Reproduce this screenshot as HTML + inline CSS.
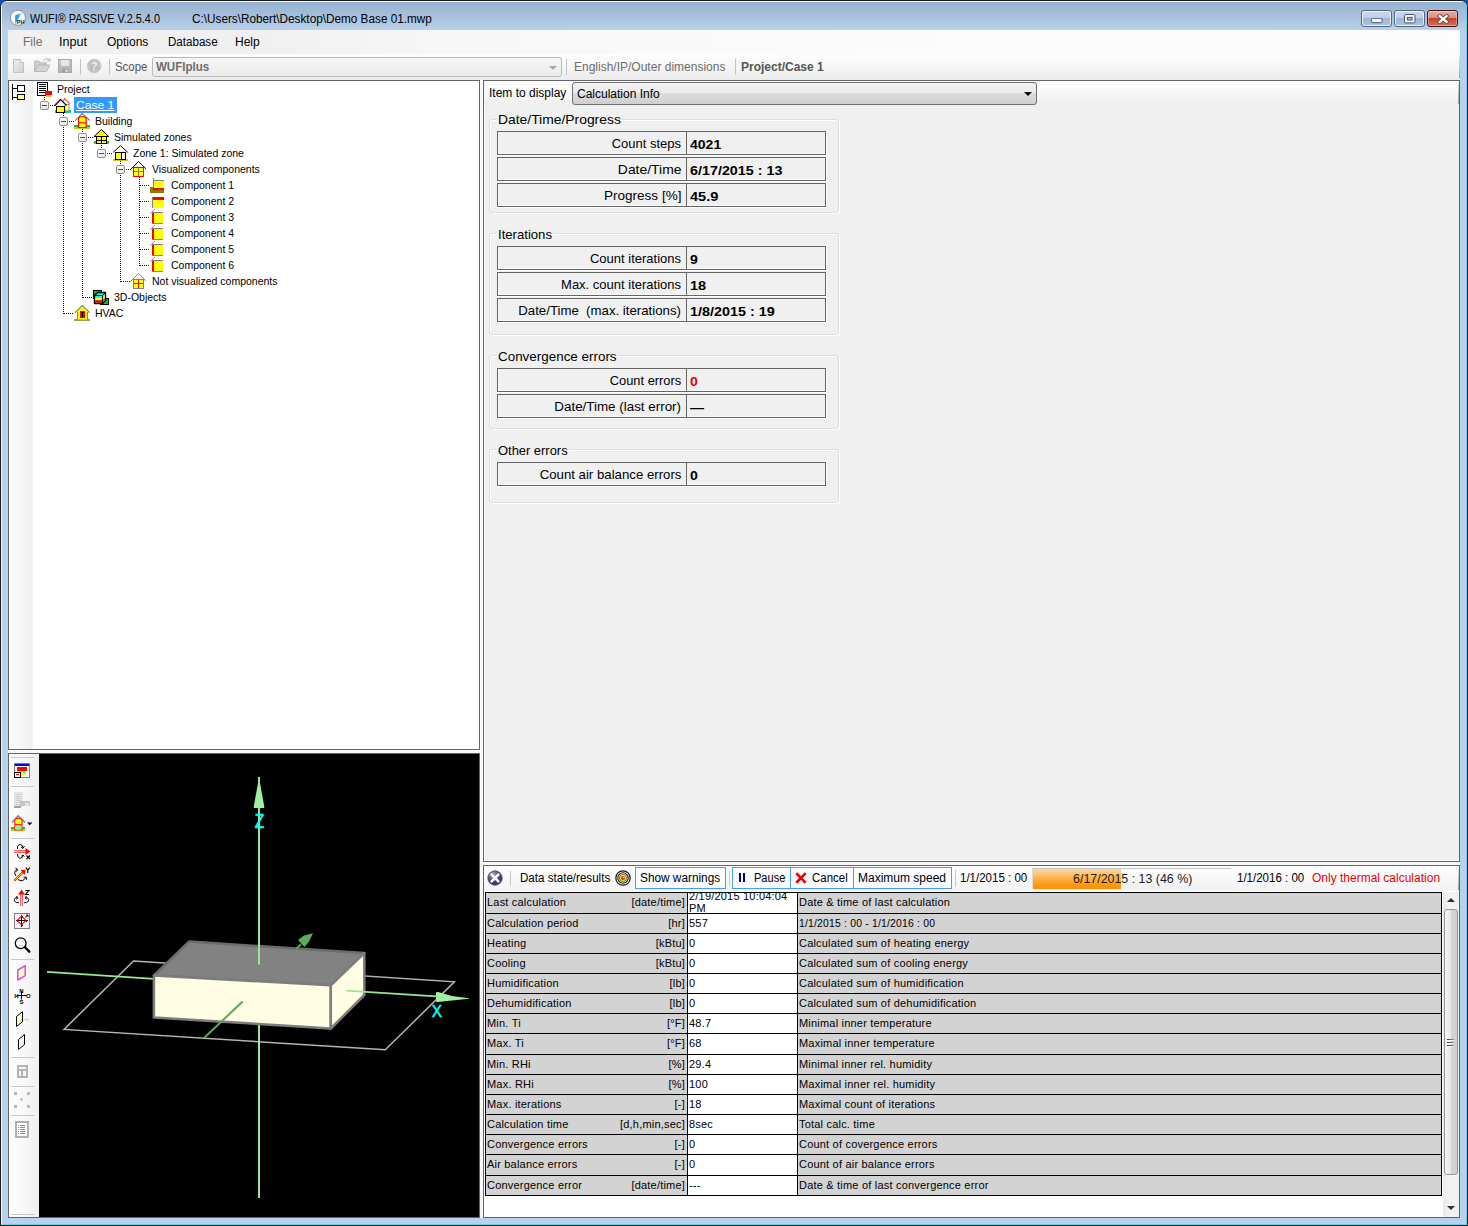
<!DOCTYPE html>
<html>
<head>
<meta charset="utf-8">
<title>WUFI PASSIVE</title>
<style>
*{box-sizing:border-box;margin:0;padding:0}
html,body{width:1468px;height:1226px;overflow:hidden;background:#1450b0}
body{position:relative;font-family:"Liberation Sans",sans-serif;font-size:12px;color:#000}
.a{position:absolute}
.sx{display:inline-block;transform-origin:0 50%;white-space:pre}
#frame{position:absolute;left:0;top:0;width:1468px;height:1226px;background:#b9d1ea;border:1px solid #1c1c1c;border-radius:7px 7px 0 0;overflow:hidden}
#frame:before{content:"";position:absolute;left:0;top:0;right:0;bottom:0;border:1px solid rgba(255,255,255,.85);border-right-color:#5fd0f4;border-bottom-color:#5fd0f4;border-radius:6px 6px 0 0}
#titlebar{position:absolute;left:1px;top:1px;width:1464px;height:28px;background:linear-gradient(#98b2d3,#a2bdd9 40%,#b9d1ea)}
#title{position:absolute;left:30px;top:12px;font-size:12px;line-height:14px;white-space:pre}
#client{position:absolute;left:8px;top:30px;width:1452px;height:1188px;background:#f8f8f8}
#menubar{position:absolute;left:0;top:0;width:1452px;height:24px;background:linear-gradient(90deg,#f0f0f0 0,#f0f0f0 17%,#f7f7f7 30%,#fbfbfb 60%,#fdfdfd)}
#menubar>span{position:absolute;top:5px;font-size:12px;line-height:14px}
#toolbar{position:absolute;left:0;top:24px;width:1452px;height:26px;background:linear-gradient(#fdfdfd,#f6f6f6 50%,#ebebeb)}
.wb{position:absolute;top:10px;height:17px;border:1px solid #55667f;border-radius:3px;background:linear-gradient(#c6d8ee,#bdd1ea 45%,#9eb7d5 50%,#adc5e0);box-shadow:inset 0 0 0 1px rgba(255,255,255,.7)}
.wb.cl{border-color:#431416;background:linear-gradient(#eab0a2,#dc8a78 45%,#c4442c 50%,#d7735a);box-shadow:inset 0 0 0 1px rgba(255,255,255,.35)}
.tsep{position:absolute;top:5px;width:1px;height:16px;background:#c2c2c2}
#tree{position:absolute;left:0;top:50px;width:472px;height:670px;background:#fff;border:1px solid #646464}
#tree .strip{position:absolute;left:0;top:0;width:24px;height:668px;background:linear-gradient(90deg,#fcfcfc,#f6f6f6 50%,#efefef)}
.tr{position:absolute;font-size:11px;line-height:16px;height:16px;white-space:pre}
.vd{position:absolute;width:1px;background:repeating-linear-gradient(to bottom,#111 0 1px,transparent 1px 2px)}
.hd{position:absolute;height:1px;background:repeating-linear-gradient(to right,#111 0 1px,transparent 1px 2px)}
.ex{position:absolute;width:9px;height:9px;border:1px solid #919191;border-radius:2px;background:linear-gradient(135deg,#fff,#e4e4e4)}
.ex:after{content:"";position:absolute;left:1px;top:3px;width:5px;height:1px;background:#36469a}
.ic{position:absolute;width:16px;height:16px}
#view{position:absolute;left:0;top:723px;width:472px;height:465px;background:#000;border:1px solid #646464}
#view .strip{position:absolute;left:0;top:0;width:30px;height:463px;background:linear-gradient(90deg,#fdfdfd,#f8f8f8 50%,#efefef)}
#rt{position:absolute;left:475px;top:50px;width:977px;height:782px;background:#f0f0f0;border:1px solid #646464;box-shadow:inset 1px -1px 0 #fbfbfb}
#rb{position:absolute;left:475px;top:835px;width:977px;height:353px;background:#fff;border:1px solid #646464}
.gb{position:absolute;border:1px solid #d5dfe5;border-radius:3px;box-shadow:inset 1px 1px 0 #fff, 1px 1px 0 #fff}
.gb>b{position:absolute;left:6px;top:-8px;padding:0 2px;background:#f0f0f0;font-weight:normal;font-size:13px;line-height:16px;white-space:pre}
.row{position:absolute;left:7px;width:329px;height:24px;border:1px solid #646464;font-size:13px;line-height:22px;box-shadow:0 1px 0 #fff,1px 0 0 #fff,inset 1px -1px 0 #fafafa}
.row i{position:absolute;left:0;top:0;width:189px;height:22px;border-right:1px solid #646464;text-align:right;padding-right:5px;padding-top:1px;font-style:normal;white-space:pre}
#tbl .c{position:absolute;background:#d3d3d3;font-size:11px;line-height:13px;overflow:hidden;white-space:pre}
#tbl .c.w{background:#fff}
#tbl .c .l{position:absolute;left:1px;top:3px;letter-spacing:.2px}
#tbl .c .r{position:absolute;right:2px;top:3px;letter-spacing:.2px}
.row u{position:absolute;left:192px;top:2px;text-decoration:none;font-weight:bold;white-space:pre}
</style>
</head>
<body>
<div id="frame"><div id="titlebar"></div></div>
<div id="title"><span class="sx" style="transform:scaleX(.905)">WUFI® PASSIVE V.2.5.4.0</span><span class="sx a" style="left:161.5px;top:0;transform:scaleX(.98)">C:\Users\Robert\Desktop\Demo Base 01.mwp</span></div>
<svg class="a" style="left:9px;top:9px" width="18" height="18" viewBox="9 9 18 18"><defs><linearGradient id="ph" x1="0" y1="0" x2="1" y2="0"><stop offset="0" stop-color="#149ae0"/><stop offset=".45" stop-color="#3aa8e4"/><stop offset="1" stop-color="#e8f4fc"/></linearGradient></defs><circle cx="17.9" cy="17.8" r="7.6" fill="#f7f7f7" stroke="#8a8a8a" stroke-width=".9"/><path d="M15.1 15.4 L22.3 12.2 L17 21 L15.4 24.6 Z" fill="url(#ph)"/><text x="20.6" y="23.6" font-family="Liberation Sans, sans-serif" font-weight="bold" font-size="5.6" fill="#222" text-anchor="middle">PH</text></svg>
<div class="a" style="left:0;top:0"><div class="wb " style="left:1361px;width:31px"><svg class="a" style="left:9px;top:7px" width="13" height="7" viewBox="0 0 13 7"><rect x=".5" y=".3" width="10.500" height="4.4" rx="1.2" fill="#f4f4f4" stroke="#4b5568" stroke-width="1"/></svg></div><div class="wb " style="left:1394px;width:31px"><svg class="a" style="left:9px;top:3px" width="13" height="11" viewBox="0 0 13 11"><rect x=".5" y=".5" width="10.500" height="8.400" rx="1.2" fill="#f4f4f4" stroke="#4b5568" stroke-width="1"/><rect x="3.4" y="3.4" width="4.700" height="2.600" fill="#a8bedc" stroke="#4b5568" stroke-width="1"/></svg></div><div class="wb cl" style="left:1427px;width:31px"><svg class="a" style="left:9px;top:3px" width="13" height="11" viewBox="0 0 13 11"><path d="M2.800 2 L9.600 7.800 M9.600 2 L2.800 7.800" stroke="#5d4a52" stroke-width="4" stroke-linecap="square"/><path d="M2.800 2 L9.600 7.800 M9.600 2 L2.800 7.800" stroke="#fff" stroke-width="2.300" stroke-linecap="square"/></svg></div></div>
<div id="client">
<div id="menubar">
<span style="left:15px;color:#6d6d6d">File</span>
<span style="left:51px"><span class="sx" style="transform:scaleX(1.05)">Input</span></span>
<span style="left:99px">Options</span>
<span style="left:160px"><span class="sx" style="transform:scaleX(.965)">Database</span></span>
<span style="left:227px">Help</span>
</div>
<div id="toolbar"><i class="a" style="right:0;top:2px;width:1px;height:22px;background:linear-gradient(#e4e4e4,#a0a0a0)"></i>
<svg class="a" style="left:0;top:0" width="110" height="26" viewBox="8 54 110 26"><defs><linearGradient id="gp" x1="0" y1="0" x2="1" y2="1"><stop offset="0" stop-color="#f0f0f0"/><stop offset="1" stop-color="#cfcfcf"/></linearGradient><linearGradient id="gf" x1="0" y1="0" x2="0" y2="1"><stop offset="0" stop-color="#c4c4c4"/><stop offset="1" stop-color="#b4b4b4"/></linearGradient></defs><path d="M13.5 59.5 H20.5 L23.5 62.5 V72.5 H13.5 Z" fill="url(#gp)" stroke="#c2c2c2"/><path d="M20.5 59.5 V62.5 H23.5" fill="#fafafa" stroke="#c2c2c2"/><path d="M34.5 71.5 V61 H39 L40.5 62.8 H46.5 V65" fill="#cdcdcd" stroke="#bdbdbd"/><path d="M34.5 71.5 L38 65 H50 L46.5 71.5 Z" fill="#d4d4d4" stroke="#b8b8b8"/><path d="M43.5 60.5 Q46.5 57 49.5 60.5 M49.8 58.2 V61 H47" fill="none" stroke="#bdbdbd" stroke-width="1.1"/><rect x="58.5" y="59.5" width="13" height="13" fill="url(#gf)" stroke="#ababab"/><rect x="61" y="60" width="8" height="6" fill="#e6e6e6"/><rect x="62" y="68.5" width="6.5" height="4" fill="#a2a2a2"/><rect x="65.5" y="69.5" width="2" height="2.5" fill="#e0e0e0"/><circle cx="94.2" cy="66" r="6.8" fill="#b9b9b9" stroke="#c9c9c9" stroke-width="1"/><circle cx="94.2" cy="66" r="5.2" fill="none" stroke="#d6d6d6" stroke-width=".8"/><text x="94.2" y="70" font-family="Liberation Sans, sans-serif" font-weight="bold" font-size="10.5" fill="#f4f4f4" text-anchor="middle">?</text></svg>
<div class="tsep" style="left:72px"></div><div class="tsep" style="left:101px"></div>
<div class="a" style="left:107px;top:6px;color:#555;line-height:14px"><span class="sx" style="transform:scaleX(.95)">Scope</span></div>
<div class="a" style="left:144px;top:3px;width:410px;height:20px;border:1px solid #b9b9b9;border-radius:3px;background:linear-gradient(#f6f6f6,#ebebeb)"><span class="a" style="left:3px;top:2px;font-weight:bold;color:#6d6d6d;line-height:14px"><span class="sx" style="transform:scaleX(.96)">WUFIplus</span></span><span class="a" style="right:4px;top:8px;width:0;height:0;border:4px solid transparent;border-top:4px solid #a8a8a8;border-bottom:0"></span></div>
<div class="tsep" style="left:558px"></div><div class="tsep" style="left:727px"></div>
<div class="a" style="left:566px;top:6px;color:#6d6d6d;line-height:14px;white-space:pre">English/IP/Outer dimensions</div>
<div class="a" style="left:733px;top:6px;color:#555;font-weight:bold;line-height:14px;white-space:pre">Project/Case 1</div>
</div>
<div id="tree"><div class="strip"></div>
<div class="vd" style="left:35px;top:16px;height:4px"></div><div class="vd" style="left:54px;top:32px;height:4px"></div><div class="vd" style="left:54px;top:46px;height:187px"></div><div class="hd" style="left:55px;top:232px;width:10px"></div><div class="vd" style="left:73px;top:48px;height:4px"></div><div class="vd" style="left:73px;top:62px;height:155px"></div><div class="hd" style="left:74px;top:216px;width:10px"></div><div class="vd" style="left:92px;top:64px;height:4px"></div><div class="vd" style="left:111px;top:80px;height:4px"></div><div class="vd" style="left:111px;top:94px;height:107px"></div><div class="hd" style="left:112px;top:200px;width:10px"></div><div class="vd" style="left:130px;top:96px;height:89px"></div><div class="hd" style="left:131px;top:104px;width:10px"></div><div class="hd" style="left:131px;top:120px;width:10px"></div><div class="hd" style="left:131px;top:136px;width:10px"></div><div class="hd" style="left:131px;top:152px;width:10px"></div><div class="hd" style="left:131px;top:168px;width:10px"></div><div class="hd" style="left:131px;top:184px;width:10px"></div>
<svg class="a" style="left:1px;top:2px" width="18" height="18" viewBox="10 83 18 18" shape-rendering="crispEdges"><path d="M12.5 84 V100 M12 88.5 H17 M12 97.5 H17" stroke="#000" fill="none"/><rect x="17.5" y="85.5" width="7" height="6" fill="#fff" stroke="#000"/><rect x="17.5" y="94.5" width="7" height="5" fill="#ffff80" stroke="#000"/></svg>
<div class="ic" style="left:27px;top:0px"><svg width="16" height="16" viewBox="0 0 16 16" style="overflow:visible"><g shape-rendering="crispEdges"><rect x="1.5" y="1.5" width="10" height="13" fill="#fff" stroke="#000"/><path d="M3 3.5h7M3 5.5h7M3 7.5h7M3 9.5h7M3 11.5h7" stroke="#000"/><rect x="9" y="10" width="7" height="4" fill="#f00"/><rect x="10" y="14" width="5" height="2" fill="#ffb838"/></g></svg></div><div class="tr" style="left:48px;top:0px"><span class="sx" style="transform:scaleX(.955)">Project</span></div>
<div class="ic" style="left:46px;top:16px"><svg width="16" height="16" viewBox="0 0 16 16" style="overflow:visible"><rect x="0" y="13" width="16" height="3" fill="#10c898" shape-rendering="crispEdges"/><rect x="10" y="7.5" width="4" height="6.5" fill="#ffff80" stroke="#909090" stroke-width="1"/><path d="M7.5 5 L9.7 1.6 L15 7.2" fill="none" stroke="#f04060" stroke-width="1.1"/><path d="M0.3 8.2 L5.6 2.4 L11.2 8.2" fill="#fff" stroke="none"/><path d="M0 8.5 L5.6 2.6 L11.5 8.500" fill="none" stroke="#000" stroke-width="1.1"/><path d="M0 7.5 L5.6 1.7" fill="none" stroke="#f0207a" stroke-width="1"/><rect x="1.5" y="9.5" width="8" height="6" fill="#ff0" stroke="#000" shape-rendering="crispEdges"/></svg></div><div class="a" style="left:65px;top:16px;width:43px;height:16px;background:#3399ff"></div><div class="tr" style="left:67px;top:16px;color:#fff"><span class="sx" style="transform:scaleX(1.1);text-decoration:underline">Case 1</span></div>
<div class="ex" style="left:31px;top:20px"></div><div class="hd" style="left:41px;top:24px;width:5px"></div>
<div class="ic" style="left:65px;top:32px"><svg width="16" height="16" viewBox="0 0 16 16" style="overflow:visible"><g shape-rendering="crispEdges"><rect x="0" y="12" width="16" height="2" fill="#20c020"/><rect x="0" y="14" width="16" height="1.5" fill="#c8c820"/></g><path d="M1.2 7.6 L8.2 0.6 L15.8 7.6" fill="none" stroke="#808080" stroke-width="1.3"/><path d="M4.5 14.5 V5.5 L6 3.8 H10.5 L12.2 5.5 V14.5 Z" fill="#ff0" stroke="#f00" stroke-width="1.1"/><path d="M4.5 9.8 H12.2" stroke="#f00" stroke-width="1.1"/></svg></div><div class="tr" style="left:86px;top:32px"><span class="sx" style="transform:scaleX(.955)">Building</span></div>
<div class="ex" style="left:50px;top:36px"></div><div class="hd" style="left:60px;top:40px;width:5px"></div>
<div class="ic" style="left:84px;top:48px"><svg width="16" height="16" viewBox="0 0 16 16" style="overflow:visible"><g shape-rendering="crispEdges"><rect x="1" y="12" width="15" height="2" fill="#20c020"/><rect x="1" y="14" width="15" height="1.3" fill="#a0a068"/></g><path d="M1 7.5 L8.4 0.6 L15.8 7.5 Z" fill="#ff0" stroke="#000" stroke-width="1"/><g shape-rendering="crispEdges"><rect x="3.5" y="7.5" width="10" height="7" fill="#ff0" stroke="#000"/><path d="M8.5 7.5 V14.5 M3.5 11.5 H13.5" stroke="#000"/></g></svg></div><div class="tr" style="left:105px;top:48px"><span class="sx" style="transform:scaleX(.955)">Simulated zones</span></div>
<div class="ex" style="left:69px;top:52px"></div><div class="hd" style="left:79px;top:56px;width:5px"></div>
<div class="ic" style="left:103px;top:64px"><svg width="16" height="16" viewBox="0 0 16 16" style="overflow:visible"><rect x="1" y="14" width="15" height="1.6" fill="#c8c820" shape-rendering="crispEdges"/><path d="M1.2 7.4 L8.4 0.6 L15.8 7.4" fill="#fff" stroke="#000" stroke-width="1"/><g shape-rendering="crispEdges"><rect x="3.5" y="7.5" width="10" height="7" fill="#fff" stroke="#000"/><rect x="4" y="8" width="5" height="6" fill="#ff0"/><path d="M9.5 7.5 V14.5" stroke="#000"/></g></svg></div><div class="tr" style="left:124px;top:64px"><span class="sx" style="transform:scaleX(.955)">Zone 1: Simulated zone</span></div>
<div class="ex" style="left:88px;top:68px"></div><div class="hd" style="left:98px;top:72px;width:5px"></div>
<div class="ic" style="left:122px;top:80px"><svg width="16" height="16" viewBox="0 0 16 16" style="overflow:visible"><path d="M-0.6 8.8 L7.5 0.5 L15 7.8" fill="none" stroke="#000" stroke-width="1"/><g shape-rendering="crispEdges"><rect x="2.5" y="6.5" width="10" height="9" fill="#ff0" stroke="#f00"/><path d="M7.5 7 V15 M3 10.5 H12" stroke="#808080"/></g></svg></div><div class="tr" style="left:143px;top:80px"><span class="sx" style="transform:scaleX(.955)">Visualized components</span></div>
<div class="ex" style="left:107px;top:84px"></div><div class="hd" style="left:117px;top:88px;width:5px"></div>
<div class="ic" style="left:141px;top:96px"><svg width="16" height="16" viewBox="0 0 16 16" style="overflow:visible"><g shape-rendering="crispEdges"><rect x="0" y="10" width="14" height="6" fill="#808000"/><rect x="4" y="4" width="10" height="7" fill="#ff0"/><rect x="3" y="11" width="11" height="2" fill="#f00"/><path d="M3.5 1 V11 M3 3.5 H14" stroke="#808080"/></g></svg></div><div class="tr" style="left:162px;top:96px"><span class="sx" style="transform:scaleX(.955)">Component 1</span></div>
<div class="ic" style="left:141px;top:112px"><svg width="16" height="16" viewBox="0 0 16 16" style="overflow:visible"><g shape-rendering="crispEdges"><rect x="2" y="7" width="12" height="8" fill="#ff0"/><rect x="2" y="4" width="12" height="3" fill="#f00"/><path d="M2.5 4 V15" stroke="#808080"/></g></svg></div><div class="tr" style="left:162px;top:112px"><span class="sx" style="transform:scaleX(.955)">Component 2</span></div>
<div class="ic" style="left:141px;top:128px"><svg width="16" height="16" viewBox="0 0 16 16" style="overflow:visible"><g shape-rendering="crispEdges"><rect x="4" y="4" width="9" height="10" fill="#ff0"/><rect x="2" y="4" width="2" height="10" fill="#f00"/><path d="M2 3.5 H13 M2 14.5 H13" stroke="#808080"/></g><path d="M0 4.8 L4.8 0.2" stroke="#808080" stroke-width="1"/></svg></div><div class="tr" style="left:162px;top:128px"><span class="sx" style="transform:scaleX(.955)">Component 3</span></div>
<div class="ic" style="left:141px;top:144px"><svg width="16" height="16" viewBox="0 0 16 16" style="overflow:visible"><g shape-rendering="crispEdges"><rect x="4" y="4" width="9" height="10" fill="#ff0"/><rect x="2" y="4" width="2" height="10" fill="#f00"/><path d="M2 3.5 H13 M2 14.5 H13" stroke="#808080"/></g><path d="M0 4.8 L4.8 0.2" stroke="#808080" stroke-width="1"/></svg></div><div class="tr" style="left:162px;top:144px"><span class="sx" style="transform:scaleX(.955)">Component 4</span></div>
<div class="ic" style="left:141px;top:160px"><svg width="16" height="16" viewBox="0 0 16 16" style="overflow:visible"><g shape-rendering="crispEdges"><rect x="4" y="4" width="9" height="10" fill="#ff0"/><rect x="2" y="4" width="2" height="10" fill="#f00"/><path d="M2 3.5 H13 M2 14.5 H13" stroke="#808080"/></g><path d="M0 4.8 L4.8 0.2" stroke="#808080" stroke-width="1"/></svg></div><div class="tr" style="left:162px;top:160px"><span class="sx" style="transform:scaleX(.955)">Component 5</span></div>
<div class="ic" style="left:141px;top:176px"><svg width="16" height="16" viewBox="0 0 16 16" style="overflow:visible"><g shape-rendering="crispEdges"><rect x="4" y="4" width="9" height="10" fill="#ff0"/><rect x="2" y="4" width="2" height="10" fill="#f00"/><path d="M2 3.5 H13 M2 14.5 H13" stroke="#808080"/></g><path d="M0 4.8 L4.8 0.2" stroke="#808080" stroke-width="1"/></svg></div><div class="tr" style="left:162px;top:176px"><span class="sx" style="transform:scaleX(.955)">Component 6</span></div>
<div class="ic" style="left:122px;top:192px"><svg width="16" height="16" viewBox="0 0 16 16" style="overflow:visible"><path d="M-0.5 8.5 L7.5 0.5 L14.8 7.8" fill="none" stroke="#808080" stroke-width="1"/><g shape-rendering="crispEdges"><rect x="2.5" y="6.5" width="10" height="9" fill="#ff0" stroke="#808080"/><path d="M7.5 7 V15 M3 10.5 H12" stroke="#f00"/></g></svg></div><div class="tr" style="left:143px;top:192px"><span class="sx" style="transform:scaleX(.955)">Not visualized components</span></div>
<div class="ic" style="left:84px;top:208px"><svg width="16" height="16" viewBox="0 0 16 16" style="overflow:visible"><g shape-rendering="crispEdges"><rect x="0.5" y="1.5" width="8" height="8" fill="#0c0" stroke="#000"/><rect x="7.5" y="9.5" width="8" height="6" fill="#0c0" stroke="#000"/></g><path d="M1.5 6.5 L4.5 3.5 H12.5 V11.5 L9.5 14.5 H1.5 Z" fill="#0ff" stroke="#000" stroke-width="1.4" stroke-linejoin="round"/><rect x="2.2" y="9" width="7" height="2.2" fill="#ff0"/><rect x="2.2" y="11.2" width="7" height="2.6" fill="#f00"/><path d="M9.5 6.5 L12 4.2 V11 L9.5 13.8 Z" fill="#8c4"/><path d="M9.7 9 L12 6.8 V8.6 L9.7 11 Z" fill="#ff0"/><path d="M9.7 11 L12 8.8 V11 L9.7 13.6 Z" fill="#f40"/><path d="M1.5 6.5 H9.5 V14.5 M9.5 6.5 L12.5 3.5" fill="none" stroke="#000" stroke-width="1"/></svg></div><div class="tr" style="left:105px;top:208px"><span class="sx" style="transform:scaleX(.955)">3D-Objects</span></div>
<div class="ic" style="left:65px;top:224px"><svg width="16" height="16" viewBox="0 0 16 16" style="overflow:visible"><rect x="0" y="14.3" width="16" height="1.5" fill="#a0a050" shape-rendering="crispEdges"/><path d="M1 7.6 L8.3 0.6 L15.8 7.6 L13.5 7.6 V14.5 H3.5 V7.6 Z" fill="#ff0" stroke="none"/><path d="M1 7.6 L8.3 0.6 L15.8 7.6" fill="none" stroke="#808080" stroke-width="1.2"/><path d="M3.5 7 V14.5 M13.5 7 V14.5" stroke="#808080" stroke-width="1"/><g shape-rendering="crispEdges"><rect x="6" y="6" width="5" height="7" fill="#f00"/><path d="M7 7.5 H10 M8.5 8 V12" stroke="#000"/></g></svg></div><div class="tr" style="left:86px;top:224px"><span class="sx" style="transform:scaleX(.955)">HVAC</span></div>
</div>
<div id="view"><div class="strip"></div>
<svg class="a" style="left:0;top:0" width="30" height="463" viewBox="9 754 30 463"><path d="M11 757.5 H34" stroke="#c6c6c6" shape-rendering="crispEdges"/><path d="M11 786.5 H34" stroke="#c6c6c6" shape-rendering="crispEdges"/><path d="M11 838.5 H34" stroke="#c6c6c6" shape-rendering="crispEdges"/><path d="M11 959.5 H34" stroke="#c6c6c6" shape-rendering="crispEdges"/><path d="M11 1057.5 H34" stroke="#c6c6c6" shape-rendering="crispEdges"/><path d="M11 1086.5 H34" stroke="#c6c6c6" shape-rendering="crispEdges"/><path d="M11 1115.5 H34" stroke="#c6c6c6" shape-rendering="crispEdges"/><path d="M11 1214.5 H34" stroke="#c6c6c6" shape-rendering="crispEdges"/><g shape-rendering="crispEdges"><rect x="14.5" y="763.5" width="15" height="14" fill="#fff" stroke="#808080"/><rect x="15" y="764" width="14" height="2" fill="#0000e0"/><rect x="17" y="767" width="10" height="4" fill="#f00"/><rect x="19" y="771" width="7" height="4" fill="#ff0"/><rect x="20" y="771" width="2" height="2" fill="#0ff"/><rect x="23" y="771" width="2" height="2" fill="#0ff"/><rect x="14.500" y="772.5" width="6" height="5" fill="#fff" stroke="#000"/><rect x="16" y="774" width="3" height="1" fill="#f00"/><rect x="16" y="775" width="3" height="1" fill="#ff0"/></g><g shape-rendering="crispEdges"><rect x="14" y="792" width="9" height="15" fill="#e4e4e4"/><path d="M16 794.5h5M16 796.5h5M16 798.5h5M16 800.5h5M16 802.5h5M16 804.5h5" stroke="#cfcfcf"/><rect x="14" y="806" width="7" height="2" fill="#a0a0a0"/><rect x="20" y="801" width="10" height="5" fill="#c4c4c4"/><rect x="25" y="803" width="4" height="3" fill="#e2e2e2"/></g><g shape-rendering="crispEdges"><rect x="11" y="827" width="14" height="2" fill="#20c820"/><rect x="11" y="829" width="14" height="2" fill="#c8c820"/></g><path d="M12 822.5 L18.2 815.8 L25 822.5" fill="none" stroke="#808080" stroke-width="1.4"/><path d="M14.8 830 V820 L16 818.3 H20.6 L22 820 V830 Z" fill="#ff0" stroke="#f22" stroke-width="1.2"/><rect x="15.4" y="825" width="6" height="4.4" fill="#90f090"/><path d="M14.8 824.6 H22 " stroke="#f22" stroke-width="1.2"/><path d="M27 822.5 H32.4 L29.7 825.3 Z" fill="#000"/><path d="M14 851.5 H28" stroke="#f00" stroke-width="2.2"/><path d="M14 851.5 H27" stroke="#ff0" stroke-width=".9"/><path d="M25.5 848 L30.3 851.5 L25.5 855 Z" fill="#f00"/><path d="M17.5 849 Q17 844.5 20.5 844.6 Q23 845 22.8 847.6 M21 847 L23 848.4 L24.4 846" fill="none" stroke="#000" stroke-width="1"/><path d="M17.5 854 Q17.5 858.6 20.8 858.2 Q23 857.6 23 855.6 M21.4 856.2 L23 855 L24.4 856.6" fill="none" stroke="#000" stroke-width="1"/><path d="M26.5 855.5 L30 859 M30 855.5 L26.500 859" stroke="#000" stroke-width="1.1"/><path d="M14.3 880.8 L23.5 871.8" stroke="#f00" stroke-width="2.2"/><path d="M14.3 880.800 L23 872.2" stroke="#ff0" stroke-width=".9"/><path d="M20.5 870.3 L25.6 869.8 L24.8 875 Z" fill="#f00"/><path d="M16 876 Q13 871.5 17 869.5 M15.4 868.3 L17.6 869.3 L16.6 871.6" fill="none" stroke="#000" stroke-width="1"/><path d="M18 879.5 Q22.5 882.5 25.5 878 M23.6 877.2 L26.2 877 L26.4 879.800" fill="none" stroke="#000" stroke-width="1"/><path d="M25.8 867.6 L27.8 870.2 L29.8 867.6 M27.8 870.2 V873" fill="none" stroke="#000" stroke-width="1.1"/><path d="M21.5 892 V906" stroke="#f00" stroke-width="2.2"/><path d="M21.5 893 V906" stroke="#ff0" stroke-width=".9"/><path d="M18 894.6 L21.5 889.800 L25 894.600 Z" fill="#f00"/><path d="M19 902.6 Q14 902.8 14.4 899.4 Q15 897 17.6 897.6 M16.4 896 L18 897.8 L16.2 899.4" fill="none" stroke="#000" stroke-width="1"/><path d="M24 902.6 Q29 902.800 28.600 899.4 Q28 897 25.4 897.6 M26.6 896 L25 897.8 L26.8 899.400" fill="none" stroke="#000" stroke-width="1"/><path d="M25.4 890.5 H29 L25.4 894.5 H29" fill="none" stroke="#000" stroke-width="1.1"/><rect x="14.5" y="913.5" width="15" height="15" fill="#f4f4f4" stroke="#808080" shape-rendering="crispEdges"/><path d="M21.5 915 V927 M16 920.5 H28" stroke="#000" stroke-width="1" shape-rendering="crispEdges"/><path d="M20.500 916.500 h2 M20.500 925.500 h2 M17.500 919.500 v2 M26.500 919.500 v2" stroke="#000" stroke-width="1" shape-rendering="crispEdges"/><path d="M21.5 916.2 L26 920.500 L21.5 924.800 L17 920.500 Z" fill="none" stroke="#f00" stroke-width="1.1"/><path d="M25.2 917.400 L27.8 915.2 M26 915 H28 V917" fill="none" stroke="#000" stroke-width=".9"/><circle cx="20.7" cy="943.2" r="5.4" fill="#fbfbfb" stroke="#000" stroke-width="1.3"/><path d="M18.6 945 Q20.6 946.8 22.8 945" fill="none" stroke="#c8c8c8" stroke-width="1"/><path d="M24.8 947.2 L29.3 951.700" stroke="#000" stroke-width="2.4" stroke-linecap="round"/><path d="M17.8 970 L25.2 965.800 V975.600 L17.800 980 Z" fill="#ffffc0" stroke="#e050e0" stroke-width="1.6" stroke-linejoin="round"/><path d="M21.5 991.5 V999.5 M16.5 995.5 H26.5" stroke="#000" stroke-width="1"/><g font-family="Liberation Sans, sans-serif" font-weight="bold" font-size="6" fill="#000" text-anchor="middle"><text x="21.5" y="993.4">N</text><text x="21.5" y="1004.2">S</text><text x="16.300" y="998">H</text><text x="28.4" y="998">O</text></g><path d="M16.5 1016.5 L22.5 1011.8 V1021.800 L16.500 1026.400 Z" fill="#ffffc0" stroke="#000" stroke-width="1"/><path d="M23 1019.5 H28 M26.4 1017.6 L28.6 1019.500 L26.400 1021.4" fill="none" stroke="#d4d4d4" stroke-width="1"/><path d="M18.5 1039.5 L24.5 1034.6 V1044.600 L18.500 1049.400 Z" fill="#fff" stroke="#000" stroke-width="1"/><g shape-rendering="crispEdges"><rect x="17.500" y="1065.500" width="9" height="11" fill="#f4f4f4" stroke="#b4b4b4" stroke-width="2"/><path d="M17 1069.500 H27 M22 1069 V1077" stroke="#b4b4b4" stroke-width="2"/></g><g fill="#b8b8b8" shape-rendering="crispEdges"><rect x="14" y="1092" width="3" height="3"/><rect x="27" y="1092" width="3" height="3"/><rect x="14" y="1105" width="3" height="3"/><rect x="27" y="1105" width="3" height="3"/></g><path d="M19.5 1099.500 L22.500 1097.5 V1101.500 Z" fill="#bcbcbc"/><g shape-rendering="crispEdges"><rect x="15.5" y="1121.500" width="12" height="15" fill="#fff" stroke="#b0b0b0" stroke-width="2"/><path d="M19.500 1125.500 H25 M19.500 1127.500 H25 M19.500 1129.500 H25 M19.500 1131.500 H25 M19.500 1133.500 H25" stroke="#8c8c8c"/><path d="M17.500 1125.500 h1 M17.500 1127.500 h1 M17.500 1129.500 h1 M17.500 1131.500 h1 M17.500 1133.500 h1" stroke="#8c8c8c"/></g></svg>
<svg class="a" style="left:30px;top:0" width="440" height="463" viewBox="39 754 440 463">
<polygon points="133.5,961 454.4,981.8 385.3,1049.8 64,1029.4" fill="none" stroke="#b4b4b4" stroke-width="1.5"/>
<line x1="47" y1="971.8" x2="154" y2="978.8" stroke="#98e898" stroke-width="1.8"/>
<line x1="259" y1="777" x2="259" y2="964.5" stroke="#98e898" stroke-width="2"/>
<line x1="259" y1="1025" x2="259" y2="1198" stroke="#98e898" stroke-width="2"/>
<polygon points="258,783 260,783 264.2,806 264.2,808 253.8,808 253.8,806" fill="#a0f0a0"/>
<polygon points="189,941.6 364.3,953 330.8,985.3 153.9,975.5" fill="#828282" stroke="#6c6c6c" stroke-width="2.5" stroke-linejoin="round"/>
<polygon points="153.9,975.5 330.8,985.3 330.8,1028.5 153.9,1017.4" fill="#fffde4" stroke="#7d7d7d" stroke-width="2.5" stroke-linejoin="round"/>
<polygon points="330.8,985.3 364.3,953 364.3,995 330.8,1028.5" fill="#fffde4" stroke="#7d7d7d" stroke-width="2.5" stroke-linejoin="round"/>
<line x1="259" y1="941" x2="259" y2="964.5" stroke="#98e898" stroke-width="2"/>
<line x1="346.4" y1="990.6" x2="440" y2="996.6" stroke="#98e898" stroke-width="1.8"/>
<polygon points="436,992.2 438,992 452,996 469,998.2 469,998.8 452,1000.6 438,1002 436,1001.8" fill="#a0f0a0"/>
<line x1="204.3" y1="1037.8" x2="242.6" y2="1001.5" stroke="#58a858" stroke-width="2"/>
<line x1="296" y1="949" x2="301" y2="944.3" stroke="#58a858" stroke-width="2"/>
<polygon points="298,940 304,935.5 313,933.3 309,941.5 304.5,947" fill="#5cac5c"/>
<text transform="translate(259.500,828) scale(.8,1)" font-size="19.5" fill="#00ffff" stroke="#00ffff" stroke-width=".6" text-anchor="middle" font-family="Liberation Sans, sans-serif">Z</text>
<text transform="translate(437,1017) scale(.92,1)" font-size="16.800" fill="#00ffff" stroke="#00ffff" stroke-width=".5" text-anchor="middle" font-family="Liberation Sans, sans-serif">X</text>
</svg>
</div>
<div id="rt">
<div class="a" style="left:0;top:0;width:975px;height:25px;background:linear-gradient(#fdfdfd,#f7f7f7 50%,#eeeeee)"><i class="a" style="right:0;top:2px;width:1px;height:21px;background:linear-gradient(#e0e0e0,#9c9c9c)"></i></div>
<div class="a" style="left:5px;top:5px;line-height:14px;white-space:pre">Item to display</div>
<div class="a" style="left:88px;top:1px;width:465px;height:23px;border:1px solid #707070;border-radius:3px;background:linear-gradient(#f2f2f2,#ebebeb 45%,#dddddd 50%,#cfcfcf)"><span class="a" style="left:4px;top:4px;line-height:14px;white-space:pre">Calculation Info</span><span class="a" style="right:4px;top:9px;width:0;height:0;border:4px solid transparent;border-top:4px solid #000;border-bottom:0"></span></div>
<div class="gb" style="left:5px;top:38px;width:350px;height:94px"><b style="top:-8px"><span class="sx" style="transform:scaleX(1.067)">Date/Time/Progress</span></b>
<div class="row" style="top:11px"><i><span class="sx" style="transform-origin:100% 50%;transform:scaleX(1.0)">Count steps</span></i><u><span class="sx" style="transform:scaleX(1.08)">4021</span></u></div>
<div class="row" style="top:37px"><i><span class="sx" style="transform-origin:100% 50%;transform:scaleX(1.07)">Date/Time</span></i><u><span class="sx" style="transform:scaleX(1.103)">6/17/2015 : 13</span></u></div>
<div class="row" style="top:63px"><i><span class="sx" style="transform-origin:100% 50%;transform:scaleX(1.04)">Progress [%]</span></i><u><span class="sx" style="transform:scaleX(1.12)">45.9</span></u></div>
</div>
<div class="gb" style="left:5px;top:152px;width:350px;height:102px"><b style="top:-7px"><span class="sx" style="transform:scaleX(1.009)">Iterations</span></b>
<div class="row" style="top:12px"><i><span class="sx" style="transform-origin:100% 50%;transform:scaleX(1.0)">Count iterations</span></i><u><span class="sx" style="transform:scaleX(1.08)">9</span></u></div>
<div class="row" style="top:38px"><i><span class="sx" style="transform-origin:100% 50%;transform:scaleX(1.0)">Max. count iterations</span></i><u><span class="sx" style="transform:scaleX(1.12)">18</span></u></div>
<div class="row" style="top:64px"><i><span class="sx" style="transform-origin:100% 50%;transform:scaleX(1.017)">Date/Time  (max. iterations)</span></i><u><span class="sx" style="transform:scaleX(1.105)">1/8/2015 : 19</span></u></div>
</div>
<div class="gb" style="left:5px;top:274px;width:350px;height:74px"><b style="top:-7px"><span class="sx" style="transform:scaleX(1.032)">Convergence errors</span></b>
<div class="row" style="top:12px"><i><span class="sx" style="transform-origin:100% 50%;transform:scaleX(0.99)">Count errors</span></i><u style="color:#e00000"><span class="sx" style="transform:scaleX(1.08)">0</span></u></div>
<div class="row" style="top:38px"><i><span class="sx" style="transform-origin:100% 50%;transform:scaleX(1.03)">Date/Time (last error)</span></i><u><span class="sx" style="transform:scaleX(1.08)">—</span></u></div>
</div>
<div class="gb" style="left:5px;top:368px;width:350px;height:54px"><b style="top:-7px"><span class="sx" style="transform:scaleX(0.993)">Other errors</span></b>
<div class="row" style="top:12px"><i><span class="sx" style="transform-origin:100% 50%;transform:scaleX(1.017)">Count air balance errors</span></i><u><span class="sx" style="transform:scaleX(1.08)">0</span></u></div>
</div>
</div>
<div id="rb">
<div class="a" style="left:0;top:0;width:975px;height:25px;background:linear-gradient(#fdfdfd,#f3f3f3)"><i class="a" style="right:0;top:3px;width:1px;height:21px;background:linear-gradient(#e0e0e0,#9c9c9c)"></i></div>
<div class="a" style="left:26px;top:5px;width:1px;height:15px;background:#c9c9c9"></div>
<div class="a" style="left:36px;top:5px;line-height:14px;white-space:pre"><span class="sx" style="transform:scaleX(.966)">Data state/results</span></div>
<svg class="a" style="left:3px;top:4px" width="16" height="16" viewBox="0 0 16 16"><defs><radialGradient id="cg" cx="35%" cy="25%" r="80%"><stop offset="0" stop-color="#a4a4ac"/><stop offset=".5" stop-color="#50527c"/><stop offset="1" stop-color="#26267a"/></radialGradient></defs><circle cx="8" cy="8" r="7.2" fill="url(#cg)" stroke="#3c3c50" stroke-width=".7"/><path d="M4.6 4.6 L11.4 11.4 M11.4 4.6 L4.6 11.4" stroke="#fff" stroke-width="2.6" stroke-linecap="round"/></svg>
<svg class="a" style="left:131px;top:4px" width="16" height="16" viewBox="0 0 16 16"><circle cx="8" cy="8" r="7.2" fill="#fff" stroke="#111" stroke-width="1.2"/><circle cx="8" cy="8" r="5.2" fill="#fff" stroke="#111" stroke-width="1.1"/><circle cx="8" cy="8" r="3.6" fill="#ffee00" stroke="#222" stroke-width=".6"/><circle cx="8" cy="8" r="2" fill="#d03020"/><circle cx="8.6" cy="7.4" r=".9" fill="#ffd800"/></svg>
<div class="a" style="left:151px;top:1px;width:91px;height:22px;border:1px solid #4a9cf0;background:#f9fbfe;line-height:14px;white-space:pre"><span class="a" style="left:4px;top:3px"><span class="sx" style="transform:scaleX(0.985)">Show warnings</span></span></div>
<div class="a" style="left:245px;top:5px;width:1px;height:15px;background:#c9c9c9"></div>
<div class="a" style="left:248px;top:1px;width:59px;height:22px;border:1px solid #4a9cf0;background:#f9fbfe;line-height:14px;white-space:pre"><i class="a" style="left:6px;top:5px;width:2px;height:9px;background:#000080"></i><i class="a" style="left:10px;top:5px;width:2px;height:9px;background:#000080"></i><span class="a" style="left:21px;top:3px"><span class="sx" style="transform:scaleX(0.92)">Pause</span></span></div>
<div class="a" style="left:306px;top:1px;width:64px;height:22px;border:1px solid #4a9cf0;background:#f9fbfe;line-height:14px;white-space:pre"><svg class="a" style="left:4px;top:4px" width="12" height="12" viewBox="0 0 12 12"><path d="M2.2 2.2 L9.800 9.800 M9.800 2.2 L2.2 9.800" stroke="#f00000" stroke-width="2.6" stroke-linecap="square"/></svg><span class="a" style="left:21px;top:3px"><span class="sx" style="transform:scaleX(0.955)">Cancel</span></span></div>
<div class="a" style="left:369px;top:1px;width:99px;height:22px;border:1px solid #4a9cf0;background:#f9fbfe;line-height:14px;white-space:pre"><span class="a" style="left:4px;top:3px"><span class="sx" style="transform:scaleX(1)">Maximum speed</span></span></div>
<div class="a" style="left:471px;top:4px;width:1px;height:17px;background:#c9c9c9"></div>
<div class="a" style="left:476px;top:5px;line-height:14px;white-space:pre"><span class="sx" style="transform:scaleX(.96)">1/1/2015 : 00</span></div>
<div class="a" style="left:548px;top:2px;width:199px;height:21px;background:linear-gradient(#fbfbfb,#f1f1f1);border-top:1px solid #c4c4c4;border-left:1px solid #dcdcdc"><div class="a" style="left:0;top:0;width:88px;height:20px;background:linear-gradient(#fbd6a2,#fdb757 40%,#ff9a16 75%,#ff9000)"></div><div class="a" style="left:0;top:3px;width:199px;text-align:center;line-height:14px;white-space:pre;color:#1c1c1c"><span class="sx" style="transform-origin:50% 50%;transform:scaleX(1.033)">6/17/2015 : 13 (46 %)</span></div></div>
<div class="a" style="left:753px;top:5px;line-height:14px;white-space:pre"><span class="sx" style="transform:scaleX(.96)">1/1/2016 : 00</span></div>
<div class="a" style="left:828px;top:5px;line-height:14px;white-space:pre;color:#f00000">Only thermal calculation</div>
<div class="a" id="tbl" style="left:1px;top:26px;width:957px;height:304px;background:#000">
<div class="c" style="left:1px;top:1px;width:201px;height:20px"><span class="l">Last calculation</span><span class="r">[date/time]</span></div><div class="c w" style="left:203px;top:1px;width:109px;height:20px"><span class="l" style="top:-3px;line-height:12px;white-space:pre">2/19/2015 10:04:04
PM</span></div><div class="c" style="left:313px;top:1px;width:643px;height:20px"><span class="l">Date &amp; time of last calculation</span></div>
<div class="c" style="left:1px;top:22px;width:201px;height:19px"><span class="l">Calculation period</span><span class="r">[hr]</span></div><div class="c w" style="left:203px;top:22px;width:109px;height:19px"><span class="l">557</span></div><div class="c" style="left:313px;top:22px;width:643px;height:19px"><span class="l" style="display:inline-block;transform-origin:0 50%;transform:scaleX(.945)">1/1/2015 : 00 - 1/1/2016 : 00</span></div>
<div class="c" style="left:1px;top:42px;width:201px;height:19px"><span class="l">Heating</span><span class="r">[kBtu]</span></div><div class="c w" style="left:203px;top:42px;width:109px;height:19px"><span class="l">0</span></div><div class="c" style="left:313px;top:42px;width:643px;height:19px"><span class="l">Calculated sum of heating energy</span></div>
<div class="c" style="left:1px;top:62px;width:201px;height:19px"><span class="l">Cooling</span><span class="r">[kBtu]</span></div><div class="c w" style="left:203px;top:62px;width:109px;height:19px"><span class="l">0</span></div><div class="c" style="left:313px;top:62px;width:643px;height:19px"><span class="l">Calculated sum of cooling energy</span></div>
<div class="c" style="left:1px;top:82px;width:201px;height:19px"><span class="l">Humidification</span><span class="r">[lb]</span></div><div class="c w" style="left:203px;top:82px;width:109px;height:19px"><span class="l">0</span></div><div class="c" style="left:313px;top:82px;width:643px;height:19px"><span class="l">Calculated sum of humidification</span></div>
<div class="c" style="left:1px;top:102px;width:201px;height:19px"><span class="l">Dehumidification</span><span class="r">[lb]</span></div><div class="c w" style="left:203px;top:102px;width:109px;height:19px"><span class="l">0</span></div><div class="c" style="left:313px;top:102px;width:643px;height:19px"><span class="l">Calculated sum of dehumidification</span></div>
<div class="c" style="left:1px;top:122px;width:201px;height:19px"><span class="l">Min. Ti</span><span class="r">[°F]</span></div><div class="c w" style="left:203px;top:122px;width:109px;height:19px"><span class="l">48.7</span></div><div class="c" style="left:313px;top:122px;width:643px;height:19px"><span class="l">Minimal inner temperature</span></div>
<div class="c" style="left:1px;top:142px;width:201px;height:20px"><span class="l">Max. Ti</span><span class="r">[°F]</span></div><div class="c w" style="left:203px;top:142px;width:109px;height:20px"><span class="l">68</span></div><div class="c" style="left:313px;top:142px;width:643px;height:20px"><span class="l">Maximal inner temperature</span></div>
<div class="c" style="left:1px;top:163px;width:201px;height:19px"><span class="l">Min. RHi</span><span class="r">[%]</span></div><div class="c w" style="left:203px;top:163px;width:109px;height:19px"><span class="l">29.4</span></div><div class="c" style="left:313px;top:163px;width:643px;height:19px"><span class="l">Minimal inner rel. humidity</span></div>
<div class="c" style="left:1px;top:183px;width:201px;height:19px"><span class="l">Max. RHi</span><span class="r">[%]</span></div><div class="c w" style="left:203px;top:183px;width:109px;height:19px"><span class="l">100</span></div><div class="c" style="left:313px;top:183px;width:643px;height:19px"><span class="l">Maximal inner rel. humidity</span></div>
<div class="c" style="left:1px;top:203px;width:201px;height:19px"><span class="l">Max. iterations</span><span class="r">[-]</span></div><div class="c w" style="left:203px;top:203px;width:109px;height:19px"><span class="l">18</span></div><div class="c" style="left:313px;top:203px;width:643px;height:19px"><span class="l">Maximal count of iterations</span></div>
<div class="c" style="left:1px;top:223px;width:201px;height:19px"><span class="l">Calculation time</span><span class="r">[d,h,min,sec]</span></div><div class="c w" style="left:203px;top:223px;width:109px;height:19px"><span class="l">8sec</span></div><div class="c" style="left:313px;top:223px;width:643px;height:19px"><span class="l">Total calc. time</span></div>
<div class="c" style="left:1px;top:243px;width:201px;height:19px"><span class="l">Convergence errors</span><span class="r">[-]</span></div><div class="c w" style="left:203px;top:243px;width:109px;height:19px"><span class="l">0</span></div><div class="c" style="left:313px;top:243px;width:643px;height:19px"><span class="l">Count of covergence errors</span></div>
<div class="c" style="left:1px;top:263px;width:201px;height:20px"><span class="l">Air balance errors</span><span class="r">[-]</span></div><div class="c w" style="left:203px;top:263px;width:109px;height:20px"><span class="l">0</span></div><div class="c" style="left:313px;top:263px;width:643px;height:20px"><span class="l">Count of air balance errors</span></div>
<div class="c" style="left:1px;top:284px;width:201px;height:19px"><span class="l">Convergence error</span><span class="r">[date/time]</span></div><div class="c w" style="left:203px;top:284px;width:109px;height:19px"><span class="l">---</span></div><div class="c" style="left:313px;top:284px;width:643px;height:19px"><span class="l">Date &amp; time of last convergence error</span></div>
</div>
<div class="a" style="left:959px;top:26px;width:16px;height:325px;background:linear-gradient(90deg,#e9e9e9,#f3f3f3 40%,#f0f0f0)"><div class="a" style="left:1px;top:17px;width:14px;height:266px;border:1px solid #979797;border-radius:3px;background:linear-gradient(90deg,#f5f5f5,#e9e9eb 45%,#d5d5d8 50%,#cfcfd3)"></div><div class="a" style="left:4px;top:147px;width:7px;height:1px;background:linear-gradient(90deg,#333,#999);box-shadow:0 1px 0 rgba(255,255,255,.6)"></div><div class="a" style="left:4px;top:150px;width:7px;height:1px;background:linear-gradient(90deg,#333,#999);box-shadow:0 1px 0 rgba(255,255,255,.6)"></div><div class="a" style="left:4px;top:153px;width:7px;height:1px;background:linear-gradient(90deg,#333,#999);box-shadow:0 1px 0 rgba(255,255,255,.6)"></div><div class="a" style="left:4px;top:6px;width:0;height:0;border:4px solid transparent;border-bottom:4px solid #333;border-top:0"></div><div class="a" style="left:4px;top:314px;width:0;height:0;border:4px solid transparent;border-top:4px solid #333;border-bottom:0"></div></div>
</div>
</div>
</body>
</html>
